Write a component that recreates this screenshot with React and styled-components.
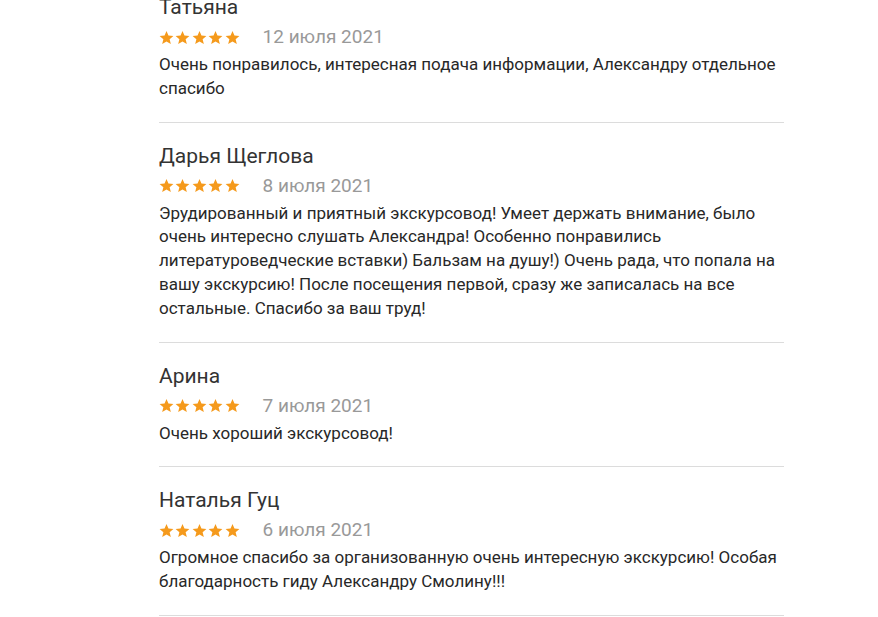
import React from "react";
import styled, { createGlobalStyle } from "styled-components";

const Global = createGlobalStyle`
  html, body { margin: 0; padding: 0; background: #fff; }
  body { font-family: Roboto, "Liberation Sans", Arial, sans-serif; overflow: hidden; }
`;

const Page = styled.div`
  width: 878px;
  height: 617px;
  overflow: hidden;
`;

const List = styled.div`
  margin: -26px 0 0 159px;
  width: 625px;
  display: flex;
  flex-direction: column;
`;

const Review = styled.article`
  padding: 21px 0 21px;
  border-bottom: 1px solid #dcdcdc;
`;

const Name = styled.div`
  font-size: 21px;
  line-height: 24px;
  color: #333;
`;

const Meta = styled.div`
  margin-top: 6px;
  display: flex;
  align-items: center;
  gap: 23px;
  height: 24px;
`;

const Stars = styled.div`
  display: flex;
  gap: 1.4px;
  color: #f59a1c;
`;

const DateText = styled.span`
  font-size: 19px;
  line-height: 24px;
  color: #999;
`;

const Body = styled.p`
  margin: 4px 0 0;
  font-size: 17px;
  line-height: 23.8px;
  color: #282828;
`;

const Star = () => (
  <svg width="15" height="15" viewBox="0 0 24 24" fill="currentColor">
    <path d="M12 1.5l3.1 7.4 7.9.6-6 5.2 1.9 7.8L12 18.3 5.1 22.5 7 14.7 1 9.5l7.9-.6z" />
  </svg>
);

const reviews = [
  {
    name: "Татьяна",
    date: "12 июля 2021",
    text: "Очень понравилось, интересная подача информации, Александру отдельное спасибо",
  },
  {
    name: "Дарья Щеглова",
    date: "8 июля 2021",
    text: "Эрудированный и приятный экскурсовод! Умеет держать внимание, было очень интересно слушать Александра! Особенно понравились литературоведческие вставки) Бальзам на душу!) Очень рада, что попала на вашу экскурсию! После посещения первой, сразу же записалась на все остальные. Спасибо за ваш труд!",
  },
  { name: "Арина", date: "7 июля 2021", text: "Очень хороший экскурсовод!" },
  {
    name: "Наталья Гуц",
    date: "6 июля 2021",
    text: "Огромное спасибо за организованную очень интересную экскурсию! Особая благодарность гиду Александру Смолину!!!",
  },
];

export default function App() {
  return (
    <Page>
      <Global />
      <List>
        {reviews.map((r) => (
          <Review key={r.name}>
            <Name>{r.name}</Name>
            <Meta>
              <Stars>
                {[0, 1, 2, 3, 4].map((i) => (
                  <Star key={i} />
                ))}
              </Stars>
              <DateText>{r.date}</DateText>
            </Meta>
            <Body>{r.text}</Body>
          </Review>
        ))}
      </List>
    </Page>
  );
}
